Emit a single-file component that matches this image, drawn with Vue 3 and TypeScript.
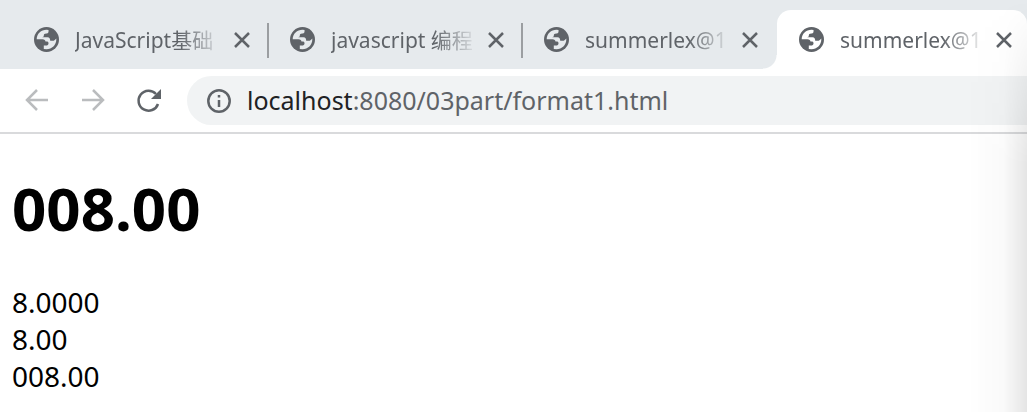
<script setup lang="ts">
import { ref } from 'vue'

interface Tab {
  title: string
  active: boolean
  size: string
}

const tabs: Tab[] = [
  { title: 'JavaScript基础', active: false, size: 'first' },
  { title: 'javascript 编程', active: false, size: 'middle' },
  { title: 'summerlex@1', active: false, size: 'middle' },
  { title: 'summerlex@1', active: true, size: 'last' },
]
const host = 'localhost'
const path = ':8080/03part/format1.html'
const editing = ref(false)
const url = ref(host + path)
const lines: string[] = ['8.0000', '8.00', '008.00']
</script>

<template>
  <div class="browser">
    <nav class="tabs" aria-label="Tabs">
      <div v-for="(tab, i) in tabs" :key="i" class="tab" :class="[tab.size, { active: tab.active }]">
        <button class="select" type="button">
          <svg class="globe" viewBox="0 0 74 74" aria-hidden="true">
            <circle cx="37" cy="37" r="37" fill="#5f6368" />
            <path
              class="land"
              d="M8 36C8 20 21 8 37 8L43 9V13C43 17 40 19 36 19C31 19 29 21 29 26C29 29 27 30 24 30H40C46 30 48 34 48 41H56C59 41 62 38 66 34V37C66 53 53 66 37 66L29 65V55H35C40 55 43 52 43 48C43 45 41 43 37 43H34C34 39 31 36 25 36Z"
            />
          </svg>
          <span class="title">{{ tab.title }}</span>
        </button>
        <button class="close" type="button" aria-label="Close tab">
          <svg viewBox="0 0 16 16" aria-hidden="true"><path d="M1 1L15 15M15 1L1 15" /></svg>
        </button>
      </div>
    </nav>
    <div class="toolbar">
      <button class="nav faded" type="button" aria-label="Back">
        <svg viewBox="0 0 26 26"><path d="M24 12H3M13 2L3 12L13 22" /></svg>
      </button>
      <button class="nav faded" type="button" aria-label="Forward">
        <svg viewBox="0 0 26 26"><path d="M2 12H23M13 2L23 12L13 22" /></svg>
      </button>
      <button class="nav" type="button" aria-label="Reload">
        <svg viewBox="0 0 26 26">
          <path d="M22 16A10 10 0 1 1 20 6" />
          <path class="solid" d="M25 1V11H15Z" />
        </svg>
      </button>
      <div class="address">
        <svg class="info" viewBox="0 0 24 24" aria-hidden="true">
          <circle cx="12" cy="12" r="10.700" />
          <path d="M12 11V18M12 6V8.500" />
        </svg>
        <input v-if="editing" v-model="url" aria-label="Address" @blur="editing = false" />
        <button v-else class="url" type="button" @click="editing = true">
          <span class="host">{{ host }}</span>{{ path }}
        </button>
      </div>
    </div>
    <main class="page">
      <h1>008.00</h1>
      <p v-for="line in lines" :key="line">{{ line }}</p>
    </main>
    <div class="shade"></div>
  </div>
</template>

<style>
body {
  margin: 0;
  background: #fff;
}
</style>

<style scoped>
.browser {
  position: relative;
  min-height: 100vh;
  overflow: hidden;
  font-family: "Noto Sans", "Noto Sans CJK SC", sans-serif;
  color: #000;
}
button {
  padding: 0;
  border: 0;
  background: none;
  font: inherit;
  color: inherit;
  text-align: left;
}
svg {
  display: block;
  flex: none;
  fill: none;
  stroke: currentColor;
}
.tabs {
  display: flex;
  padding-top: 10px;
  overflow: hidden;
  background: #e6eaed;
  color: #5f6368;
}
.tab {
  position: relative;
  box-sizing: border-box;
  display: flex;
  flex: 1 1 254px;
  align-items: center;
  height: 59px;
  min-width: 0;
  padding: 0 19px 0 21px;
}
.tab.first {
  flex-basis: 269px;
  padding-left: 34px;
}
.tab.last {
  flex-basis: 250px;
  padding: 0 15px 0 22px;
}
.tab:not(.active)::after {
  content: "";
  position: absolute;
  right: 0;
  top: 13px;
  width: 2px;
  height: 35px;
  background: #9b9ea1;
}
.tab.active {
  background: #fff;
  border-radius: 14px 14px 0 0;
}
.tab.active::before {
  content: "";
  position: absolute;
  left: -14px;
  bottom: 0;
  width: 14px;
  height: 14px;
  background: radial-gradient(circle at 0 0, transparent 13px, #fff 14px);
}
.tab:has(+ .active)::after {
  display: none;
}
.select {
  display: flex;
  flex: 1;
  align-items: center;
  gap: 16px;
  min-width: 0;
}
.globe {
  width: 25px;
  height: 25px;
  stroke: none;
}
.land {
  fill: #e6eaed;
}
.active .land {
  fill: #fff;
}
.title {
  flex: 1;
  overflow: hidden;
  font-size: 21px;
  line-height: 32px;
  white-space: nowrap;
  mask-image: linear-gradient(to right, #000 70%, transparent 100%);
}
.close {
  flex: none;
  margin-left: 10px;
}
.close svg {
  width: 16px;
  height: 16px;
  stroke-width: 2.5;
}
.toolbar {
  display: flex;
  align-items: center;
  height: 49px;
  padding: 7px 0 7px 24px;
  border-bottom: 2px solid #d9dadc;
  color: #5f6368;
}
.nav {
  margin-right: 30px;
}
.nav svg {
  width: 26px;
  height: 26px;
  stroke-width: 2.5;
}
.nav .solid {
  fill: currentColor;
  stroke: none;
}
.faded {
  color: #babcbe;
}
.address {
  display: flex;
  flex: 1;
  align-items: center;
  gap: 16px;
  height: 49px;
  margin-left: -5px;
  padding-left: 20px;
  border-radius: 25px 0 0 25px;
  background: #f1f3f4;
}
.info {
  width: 24px;
  height: 24px;
  stroke-width: 2.5;
}
.url,
input {
  flex: 1;
  padding: 0 0 2px;
  border: 0;
  outline: 0;
  background: none;
  font: inherit;
  font-size: 25px;
  line-height: 36px;
  white-space: nowrap;
}
.host {
  color: #202124;
}
.page {
  padding: 34px 12px 0;
}
h1 {
  margin: 0 0 36px;
  font-size: 60px;
  line-height: 80px;
}
p {
  margin: 0;
  font-size: 28px;
  line-height: 37px;
}
.shade {
  position: absolute;
  inset: 0 0 0 auto;
  width: 60px;
  background: linear-gradient(to right, transparent, rgba(0, 0, 0, 0.02) 60%, rgba(0, 0, 0, 0.1));
  mask-image: linear-gradient(transparent, #000 40%);
  pointer-events: none;
}
</style>
